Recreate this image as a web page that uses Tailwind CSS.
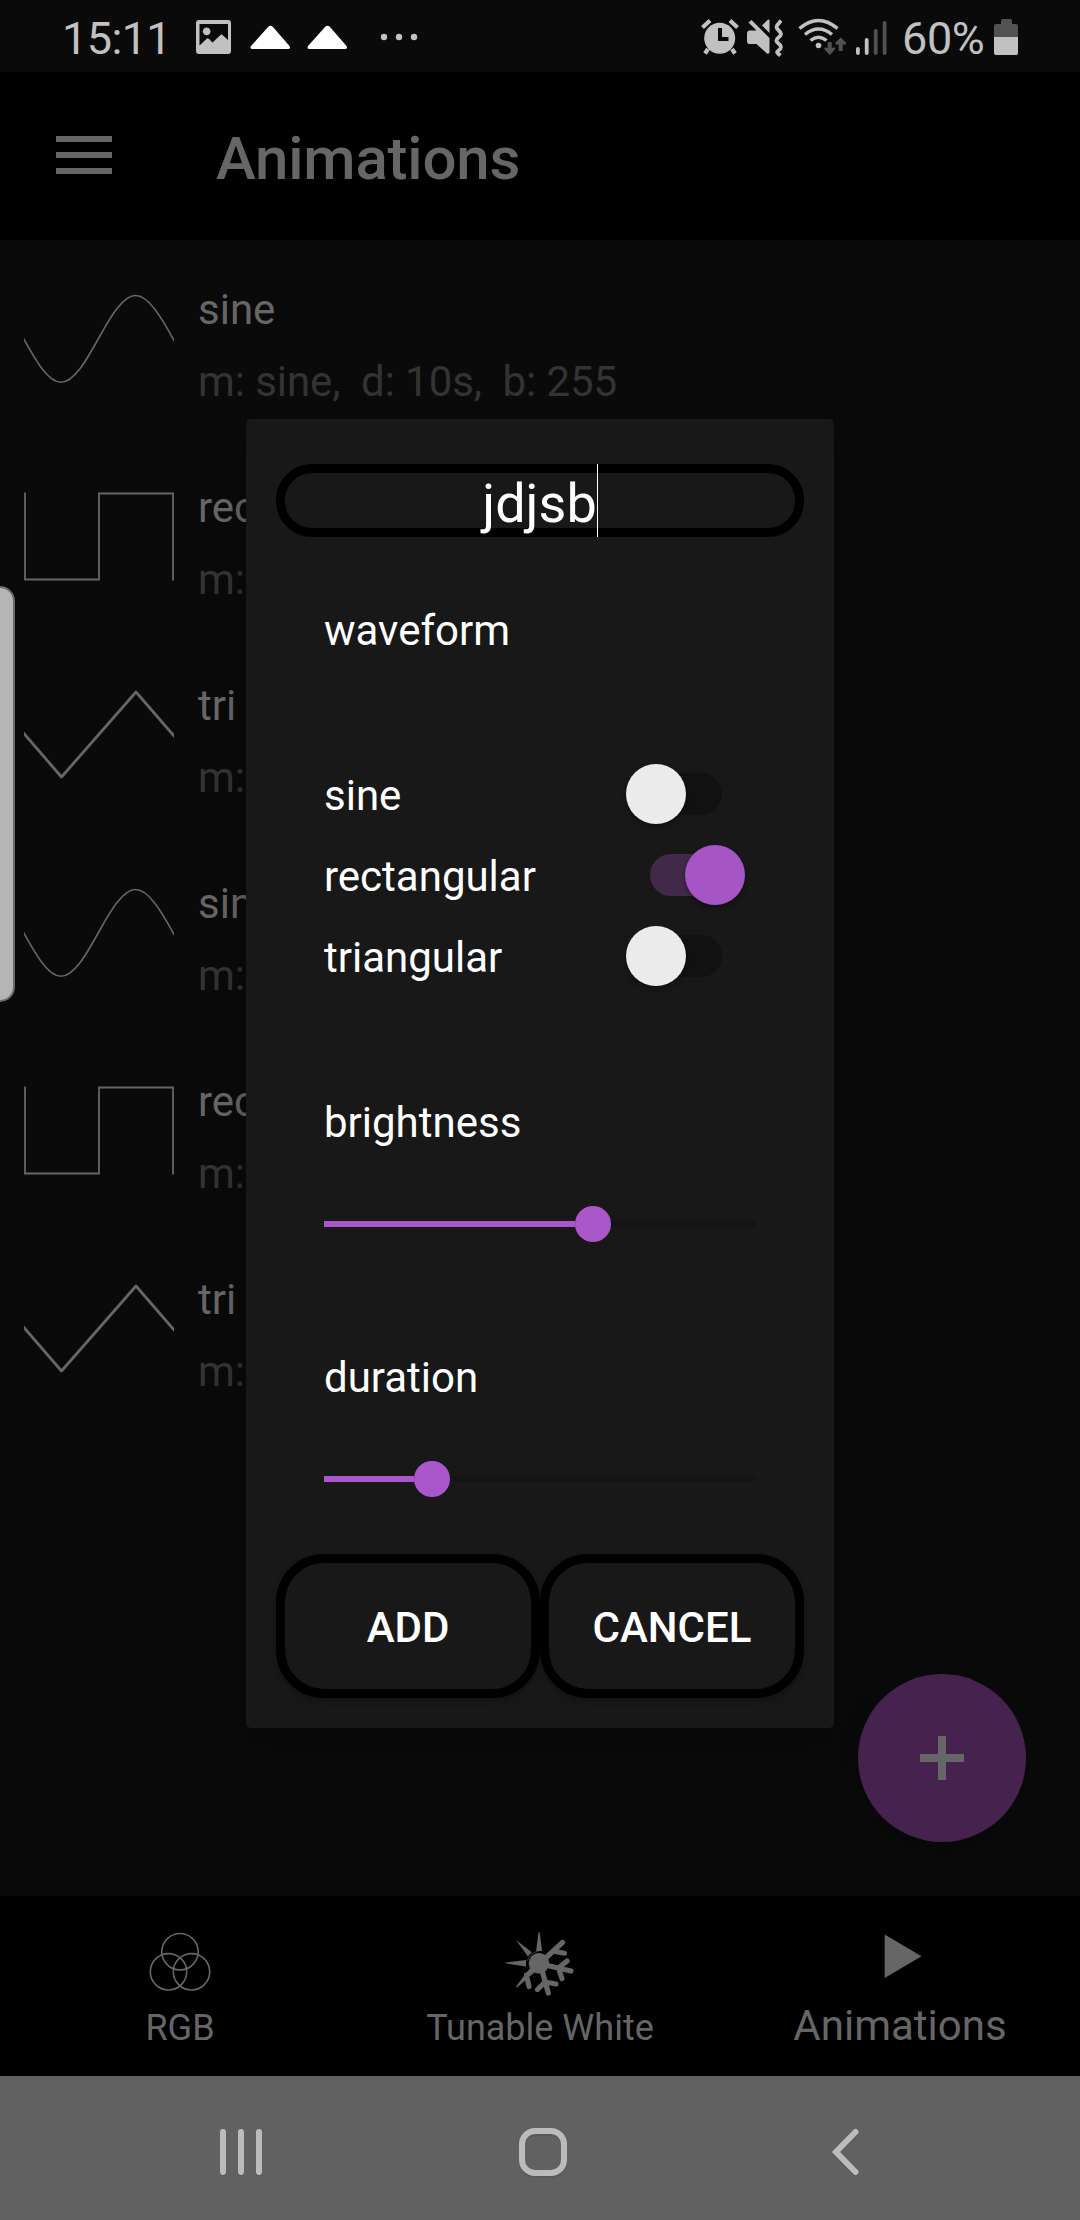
<!DOCTYPE html>
<html lang="en">
<head>
<meta charset="utf-8">
<title>Animations</title>
<script src="https://cdn.jsdelivr.net/npm/@tailwindcss/browser@4"></script>
</head>
<body class="relative flex h-[2220px] w-[1080px] flex-col overflow-hidden bg-[#0a0a0a] font-['Roboto',sans-serif] text-[42px] leading-[50px] text-[#666]">

<!-- shared waveform shapes -->
<svg class="hidden">
  <symbol id="sine" viewBox="0 0 150 90"><path d="M-.5 44.500 C12 67 24 88.300 37 88.300 C50 88.300 62 67 74.500 44.500 C87 22 99 1.500 111.500 1.500 C124 1.500 137 22 150.500 47.500" fill="none" stroke="#666" stroke-width="1.600"/></symbol>
  <symbol id="rect" viewBox="0 0 150 90"><path d="M1 .5 V87.500 H75 V1.500 H149 V88.500" fill="none" stroke="#666" stroke-width="1.800"/></symbol>
  <symbol id="tri" viewBox="0 0 150 90"><path d="M-1 42.500 L37.500 87 L112 2 L151 47" fill="none" stroke="#666" stroke-width="2.800" stroke-linejoin="round"/></symbol>
</svg>

<!-- status bar -->
<header class="flex h-[72px] shrink-0 items-center text-[45px] leading-[54px] text-[#c1c1c1]">
  <span class="ml-[62px] mt-[5px] w-[134px] shrink-0 tracking-[-0.6px]">15:11</span>
  <svg class="h-[72px] w-[240px] shrink-0" viewBox="196 0 240 72" fill="#c1c1c1">
    <path fill-rule="evenodd" d="M199 20h29q3 0 3 3v28q0 3-3 3h-29q-3 0-3-3V23q0-3 3-3zM199.500 24V45.500L207 38.500Q208 38 209 39L212.500 42.500L220.500 35Q221.500 34.200 222.500 35L228 40V24zM206.700 27.500a3.900 3.900 0 1 1-.1 0z"/>
    <g fill="#fff"><path d="M268 27q2.500-2.500 5 0l16.500 19q1.500 3-1.500 3h-35.500q-3 0-1.500-3z"/><path d="M325 27q2.500-2.500 5 0l16.500 19q1.500 3-1.500 3h-35.500q-3 0-1.500-3z"/></g>
    <circle cx="384" cy="37" r="3.200"/><circle cx="399" cy="37" r="3.200"/><circle cx="414" cy="37" r="3.200"/>
  </svg>
  <svg class="ml-auto h-[72px] w-[200px] shrink-0" viewBox="696 0 200 72" fill="#c1c1c1">
    <circle cx="719.700" cy="38.300" r="15.500"/>
    <path d="M720 28v11h8.500" fill="none" stroke="#0a0a0a" stroke-width="4"/>
    <g stroke="#c1c1c1" stroke-width="4.200" fill="none"><path d="M702.500 27.500l7.500-7M737.500 27.500l-7.500-7M708 49l-3 4.500M732 49l3 4.500"/></g>
    <path d="M749 30.500h7.500l-8-8 3-2.500L769.500 38v14.500q-1 2-2.500 1L756.500 44H749q-2-.5-2-2.500V33q0-2 2-2.500zM762 25.500l5.500-5.500q2-1 2 .5V33z"/>
    <path d="M781 20.500l-4 5q-1 1.500 0 3l3.500 4q1 1.500 0 3l-3.500 3.500q-1 1.500 0 3l3.500 3.500q1 1.500 0 3l-3 3q-1 .5.500 2l2.500 2" fill="none" stroke="#c1c1c1" stroke-width="3.800"/>
    <g fill="none" stroke="#c1c1c1" stroke-width="3.500"><path d="M799.500 28.500Q818.500 12.500 837.500 28.500M805 34.500Q818.500 23.500 832 34.500M810.500 40.500Q818.500 34 826.500 40.500"/></g>
    <circle cx="818.500" cy="45.500" r="2.800"/>
    <path d="M829.700 42v7M840.700 51V43" stroke="#525252" stroke-width="4"/>
    <path d="M824.500 47.500l3 .2h4.500l3-.2v2l-5.200 5.500-5.300-5.500zM835.500 44.500v-2l5.200-5 5.300 5v2z" fill="#525252"/>
    <rect x="856" y="47" width="3.800" height="8" rx="1.900"/><rect x="864.800" y="38" width="3.800" height="17" rx="1.900"/>
    <g fill="#525252"><rect x="873.800" y="29" width="3.800" height="26" rx="1.900"/><rect x="882.700" y="21" width="3.800" height="34" rx="1.900"/></g>
  </svg>
  <span class="mt-[5px] w-[98px] shrink-0 whitespace-nowrap pl-[6px] tracking-[-0.4px]">60%</span>
  <svg class="mr-[62px] h-[72px] w-[24px] shrink-0" viewBox="994 0 24 72"><path d="M996 24h5v-3q0-2 2-2h7q2 0 2 2v3h4q2 0 2 2v11H994V26q0-2 2-2z" fill="#525252"/><path d="M994 37h24v16q0 2-2 2h-20q-2 0-2-2z" fill="#c1c1c1"/></svg>
</header>

<!-- app bar -->
<div class="flex h-[168px] shrink-0 items-center bg-black pl-[56px]">
  <div class="-mt-[2px] flex w-[56px] flex-col gap-[10px]">
    <i class="h-[6px] bg-[#666]"></i><i class="h-[6px] bg-[#666]"></i><i class="h-[6px] bg-[#666]"></i>
  </div>
  <h1 class="ml-[104px] mt-[5px] text-[60px] font-medium leading-[70px] tracking-[-0.2px]">Animations</h1>
</div>

<!-- animation list -->
<main class="flex grow flex-col">
  <div class="flex h-[198px] gap-[24px] pl-[24px]"><svg class="mt-[54px] h-[90px] w-[150px]"><use href="#sine"/></svg><div class="flex flex-col gap-[22px] pt-[45px]"><p>sine</p><p class="whitespace-pre tracking-[-0.08px] text-[#333]">m: sine,  d: 10s,  b: 255</p></div></div>
  <div class="flex h-[198px] gap-[24px] pl-[24px]"><svg class="mt-[54px] h-[90px] w-[150px]"><use href="#rect"/></svg><div class="flex flex-col gap-[22px] pt-[45px]"><p>rec</p><p class="text-[#333]">m:</p></div></div>
  <div class="flex h-[198px] gap-[24px] pl-[24px]"><svg class="mt-[54px] h-[90px] w-[150px]"><use href="#tri"/></svg><div class="flex flex-col gap-[22px] pt-[45px]"><p>tri</p><p class="text-[#333]">m:</p></div></div>
  <div class="flex h-[198px] gap-[24px] pl-[24px]"><svg class="mt-[54px] h-[90px] w-[150px]"><use href="#sine"/></svg><div class="flex flex-col gap-[22px] pt-[45px]"><p>sin</p><p class="text-[#333]">m:</p></div></div>
  <div class="flex h-[198px] gap-[24px] pl-[24px]"><svg class="mt-[54px] h-[90px] w-[150px]"><use href="#rect"/></svg><div class="flex flex-col gap-[22px] pt-[45px]"><p>rec</p><p class="text-[#333]">m:</p></div></div>
  <div class="flex h-[198px] gap-[24px] pl-[24px]"><svg class="mt-[54px] h-[90px] w-[150px]"><use href="#tri"/></svg><div class="flex flex-col gap-[22px] pt-[45px]"><p>tri</p><p class="text-[#333]">m:</p></div></div>
</main>

<!-- bottom tabs -->
<nav class="grid h-[180px] shrink-0 grid-cols-3 bg-black text-center text-[36px]">
  <div class="flex flex-col items-center">
    <svg class="mt-[30px] h-[70px] w-[72px]" viewBox="144 1926 72 70" fill="none" stroke="#666" stroke-width="1.600"><circle cx="180" cy="1951.700" r="18.200"/><circle cx="168.500" cy="1971.800" r="18.200"/><circle cx="191.500" cy="1971.800" r="18.200"/></svg>
    <span class="mt-[7px]">RGB</span>
  </div>
  <div class="flex flex-col items-center">
    <svg class="mt-[30px] h-[70px] w-[72px]" viewBox="504 1926 72 70" fill="#666">
      <circle cx="539" cy="1963.300" r="10.300"/>
      <path d="M538.600 1932h1l2.500 19h-6zM516 1940l15.800 12.200-4 4zM505 1963.300v-.6l21-2.600v6.400z"/>
      <path d="M527.500 1961q1.500-8 11-10" fill="none" stroke="#666" stroke-width=".6"/>
      <g fill="none" stroke="#666" stroke-width="5.200" stroke-linecap="round"><path d="M543 1960.500L562.500 1942.500M555 1951.500L564.500 1953.200M541 1964L571 1971M558.500 1968L567 1961M558.500 1968L562 1978.500M540.500 1965L548.300 1993M545 1982L537.500 1989.500M545 1982L556 1984M526.500 1975L529 1986.500"/></g>
      <path d="M532 1966l6 5-9.500 6.500-11.500 10-1-1L527 1972z"/>
      <path d="M535 1972.500q-3 2-6 5" fill="none" stroke="#000" stroke-width=".8"/>
    </svg>
    <span class="mt-[7px]">Tunable White</span>
  </div>
  <div class="flex flex-col items-center text-[42px]">
    <svg class="mt-[30px] h-[70px] w-[72px]" viewBox="864 1926 72 70"><path d="M884.700 1934.500L921.500 1956.200L884.700 1978z" fill="#666"/></svg>
    <span class="mt-[5px]">Animations</span>
  </div>
</nav>

<!-- system navigation -->
<footer class="h-[144px] shrink-0 bg-[#616161]">
  <svg class="h-[144px] w-[1080px]" viewBox="0 2076 1080 144" fill="none" stroke="#bbb" stroke-width="6" stroke-linecap="round">
    <g stroke="#5a5a5a" transform="translate(0 2)"><path d="M223 2132v40M241 2132v40M259 2132v40M855.500 2132L836 2152L855.500 2172"/><rect x="522" y="2131" width="42" height="42" rx="13"/></g>
    <path d="M223 2132v40M241 2132v40M259 2132v40M855.500 2132L836 2152L855.500 2172"/><rect x="522" y="2131" width="42" height="42" rx="13"/>
  </svg>
</footer>

<!-- floating action button -->
<button class="absolute left-[858px] top-[1674px] flex size-[168px] items-center justify-center rounded-full bg-[#46224f] shadow-[0_8px_20px_rgba(0,0,0,0.25)]">
  <svg class="size-[44px]" viewBox="0 0 44 44"><path d="M18 0h8v18h18v8H26v18h-8V26H0v-8h18z" fill="#666"/></svg>
</button>

<!-- edge panel handle -->
<div class="absolute left-0 top-[586px] h-[416px] w-[15px] rounded-r-[15px] border-2 border-l-0 border-[#6a6a6a] bg-[#b5b5b5]"></div>

<!-- dialog -->
<section class="absolute left-[246px] top-[419px] flex h-[1309px] w-[588px] flex-col rounded-[5px] bg-[#181818] px-[30px] pt-[45px] text-white shadow-[0_14px_32px_rgba(0,0,0,0.3)]">
  <div class="flex h-[73px] shrink-0 items-center justify-center rounded-[36px] border-[9px] border-black text-[54px] leading-[64px]">
    <span class="mt-[6px]">jdjsb</span><i class="-my-[9px] h-[73px] w-px shrink-0 bg-white"></i>
  </div>
  <div class="flex flex-col px-[48px]">
    <h2 class="mt-[69px]">waveform</h2>
    <div class="mt-[97px] flex flex-col">
      <div class="flex h-[81px] items-center justify-between pr-[34px]"><span class="mt-[5px]">sine</span><div class="relative h-[42px] w-[72px] rounded-full bg-[#111]"><i class="absolute -left-[24px] -top-[9px] size-[60px] rounded-full bg-[#ebebeb] shadow-[0_3px_5px_rgba(0,0,0,0.35)]"></i></div></div>
      <div class="flex h-[81px] items-center justify-between pr-[34px]"><span class="mt-[5px]">rectangular</span><div class="relative h-[42px] w-[72px] rounded-full bg-[#412949]"><i class="absolute left-[35px] -top-[9px] size-[60px] rounded-full bg-[#a655c4] shadow-[0_3px_5px_rgba(0,0,0,0.35)]"></i></div></div>
      <div class="flex h-[81px] items-center justify-between pr-[34px]"><span class="mt-[5px]">triangular</span><div class="relative h-[42px] w-[72px] rounded-full bg-[#111]"><i class="absolute -left-[24px] -top-[9px] size-[60px] rounded-full bg-[#ebebeb] shadow-[0_3px_5px_rgba(0,0,0,0.35)]"></i></div></div>
    </div>
    <h2 class="mt-[102px]">brightness</h2>
    <div class="mt-[58px] flex h-[36px] items-center"><i class="h-[6px] w-[251px] bg-[#a957ca]"></i><i class="size-[36px] rounded-full bg-[#a957ca]"></i><i class="h-[6px] grow bg-[#141414]"></i></div>
    <h2 class="mt-[111px]">duration</h2>
    <div class="mt-[58px] flex h-[36px] items-center"><i class="h-[6px] w-[90px] bg-[#a957ca]"></i><i class="size-[36px] rounded-full bg-[#a957ca]"></i><i class="h-[6px] grow bg-[#151515]"></i></div>
  </div>
  <div class="mt-[57px] grid h-[144px] shrink-0 grid-cols-2 font-medium">
    <button class="rounded-[48px] border-[9px] border-black pt-[3px] shadow-[0_4px_6px_rgba(0,0,0,0.2)]">ADD</button>
    <button class="rounded-[48px] border-[9px] border-black pt-[3px] shadow-[0_4px_6px_rgba(0,0,0,0.2)]">CANCEL</button>
  </div>
</section>
</body>
</html>
